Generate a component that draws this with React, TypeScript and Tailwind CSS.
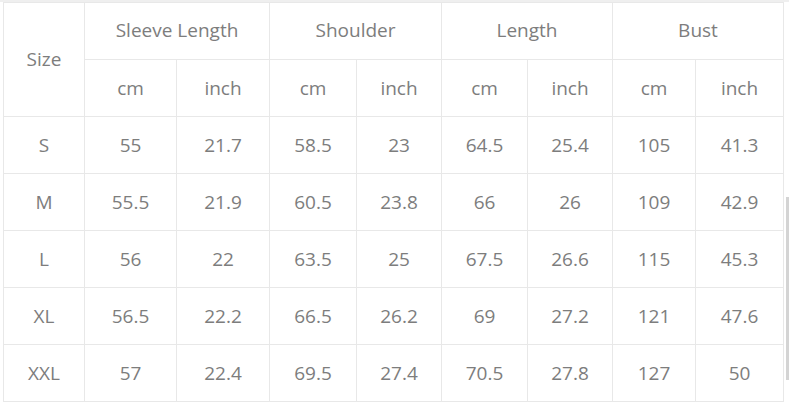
import { Fragment } from "react";

const groups = ["Sleeve Length", "Shoulder", "Length", "Bust"];

const rows: string[][] = [
  ["S", "55", "21.7", "58.5", "23", "64.5", "25.4", "105", "41.3"],
  ["M", "55.5", "21.9", "60.5", "23.8", "66", "26", "109", "42.9"],
  ["L", "56", "22", "63.5", "25", "67.5", "26.6", "115", "45.3"],
  ["XL", "56.5", "22.2", "66.5", "26.2", "69", "27.2", "121", "47.6"],
  ["XXL", "57", "22.4", "69.5", "27.4", "70.5", "27.8", "127", "50"],
];

const cell = "flex items-center justify-center border-r border-b border-[#e8e8e8]";

export default function App() {
  return (
    <div
      className="w-[789px] h-[403px] bg-white overflow-hidden text-[#7d7d7d] text-[19px]"
      style={{ fontFamily: '"Open Sans", "Noto Sans", sans-serif' }}
    >
      <div className="h-[2px] bg-[#efefef]" />
      <div className="flex">
        <div className="ml-[3px] grid grid-cols-[81px_92px_93px_87px_85px_86px_85px_83px_88px] grid-rows-[57px_57px_57px_57px_57px_57px_57px] border-l border-t border-[#e8e8e8]">
          <div className={`${cell} row-span-2`}>Size</div>
          {groups.map((g) => (
            <div key={g} className={`${cell} col-span-2 pb-[2px]`}>
              {g}
            </div>
          ))}
          {groups.map((g) => (
            <Fragment key={g}>
              <div className={cell}>cm</div>
              <div className={cell}>inch</div>
            </Fragment>
          ))}
          {rows.map((r) =>
            r.map((v, i) => (
              <div key={r[0] + i} className={cell}>
                {v}
              </div>
            ))
          )}
        </div>
        <div className="ml-[2px] mt-[195px] w-[3px] h-[183px] bg-[#d4d4d4]" />
      </div>
    </div>
  );
}
